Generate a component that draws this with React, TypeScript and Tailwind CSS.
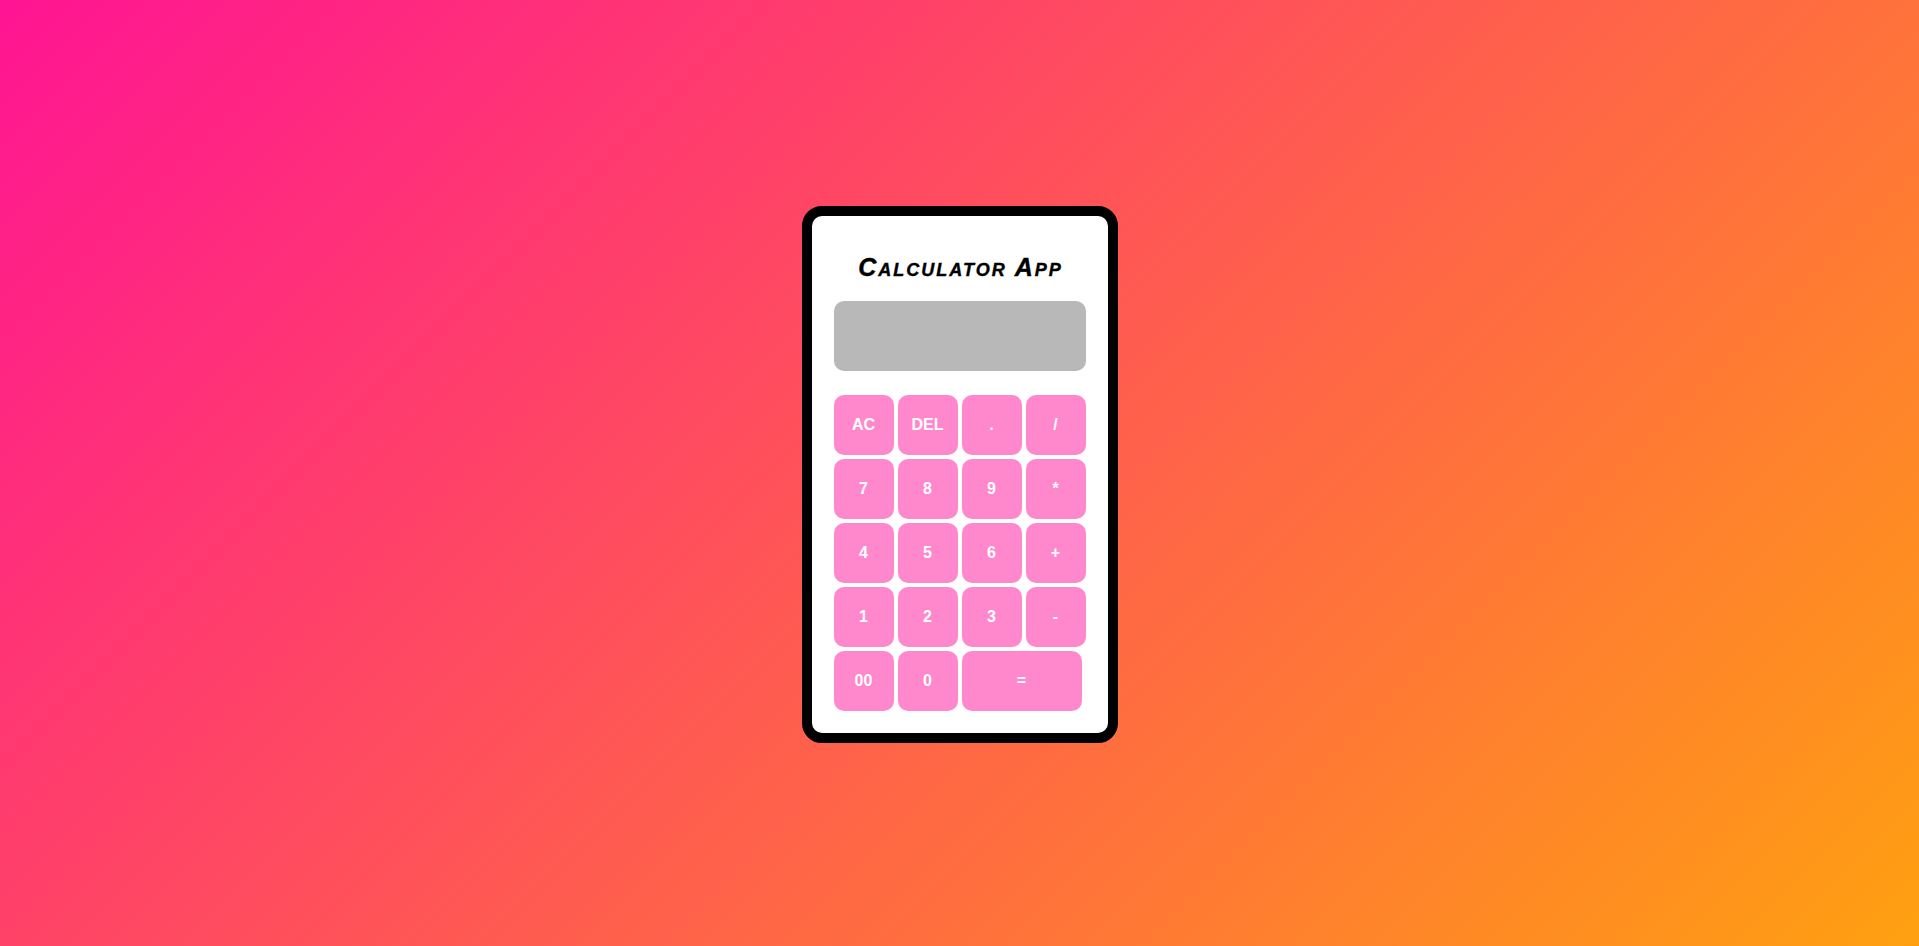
import React from "react";

type Key = { label: string; wide?: boolean };

const keys: Key[] = [
  { label: "AC" },
  { label: "DEL" },
  { label: "." },
  { label: "/" },
  { label: "7" },
  { label: "8" },
  { label: "9" },
  { label: "*" },
  { label: "4" },
  { label: "5" },
  { label: "6" },
  { label: "+" },
  { label: "1" },
  { label: "2" },
  { label: "3" },
  { label: "-" },
  { label: "00" },
  { label: "0" },
  { label: "=", wide: true },
];

const CalcKey = ({ label, wide }: Key) => (
  <button
    type="button"
    className={`h-[60px] rounded-[10px] bg-[#ff88cc] text-base font-bold text-white ${
      wide ? "col-span-2 w-[120px]" : "w-[60px]"
    }`}
  >
    {label}
  </button>
);

const App = () => {
  return (
    <div className="flex min-h-screen items-center justify-center bg-[linear-gradient(135deg,#ff1493,#ffa010)] pt-[3px] font-['Liberation_Sans',Arial,sans-serif]">
      <div className="w-[316px] rounded-[20px] border-[10px] border-black bg-white p-[22px]">
        <h1 className="mt-[15px] pl-[2px] text-center text-[25px] leading-[28px] font-bold italic tracking-[2px] [font-variant:small-caps] [-webkit-text-stroke:0.4px_black] text-black">
          Calculator App
        </h1>

        <div className="mt-[20px] h-[70px] w-full rounded-[10px] bg-[#b8b8b8]" />

        <div className="mt-[24px] grid grid-cols-[repeat(4,60px)] gap-[4px]">
          {keys.map((k) => (
            <CalcKey key={k.label} {...k} />
          ))}
        </div>
      </div>
    </div>
  );
};

export default App;
